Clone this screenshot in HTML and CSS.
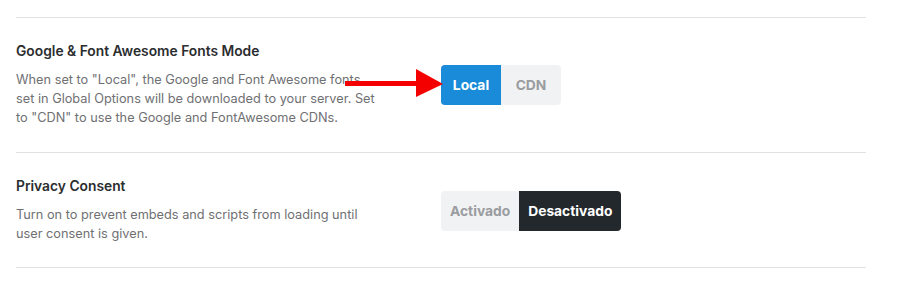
FILE: index.html
```html
<!DOCTYPE html>
<html lang="es">
  <head>
    <meta charset="utf-8">
    <title>Settings</title>
    <link rel="stylesheet" href="styles.css">
  </head>
  <body>
    <div class="settings">
      <div class="row">
        <div class="info">
          <div class="title">Google &amp; Font Awesome Fonts Mode</div>
          <div class="desc">When set to "Local", the Google and Font Awesome fonts set in Global Options will be downloaded to your server. Set to "CDN" to use the Google and FontAwesome CDNs.</div>
        </div>
        <div class="control">
          <div class="toggle">
            <span class="opt opt-blue">Local</span>
            <span class="opt">CDN</span>
          </div>
        </div>
        <svg class="arrow" width="100" height="30" viewBox="0 0 100 30">
          <rect x="0" y="12" width="74" height="5" fill="#f40000"/>
          <polygon points="71,0 71,28 98,15" fill="#f40000"/>
        </svg>
      </div>
      <div class="row">
        <div class="info">
          <div class="title">Privacy Consent</div>
          <div class="desc">Turn on to prevent embeds and scripts from loading until user consent is given.</div>
        </div>
        <div class="control">
          <div class="toggle">
            <span class="opt">Activado</span>
            <span class="opt opt-dark">Desactivado</span>
          </div>
        </div>
      </div>
    </div>
  </body>
</html>
```
FILE: styles.css
```css
body{
  margin:0;
  background:#fff;
  font-family: Inter, "Liberation Sans", sans-serif;
}
.settings{
  width:850px;
  margin:17px 0 0 16px;
  border-top:1px solid #e2e2e2;
}
.row{
  position:relative;
  display:flex;
  align-items:center;
  padding:25px 0 25px;
  border-bottom:1px solid #e2e2e2;
}
.row + .row{
  padding-bottom:24px;
}
.info{
  width:362px;
  margin-right:63px;
}
.title{
  font-size:13.8px;
  font-weight:600;
  line-height:17px;
  color:#2b2d2f;
}
.desc{
  margin-top:10px;
  font-size:12.75px;
  line-height:19px;
  color:#6f7073;
}
.toggle{
  display:flex;
  height:40px;
  border-radius:4px;
  overflow:hidden;
  background:#f1f2f3;
}
.opt{
  display:flex;
  align-items:center;
  justify-content:center;
  min-width:60px;
  box-sizing:border-box;
  padding:0 9px;
  font-size:13.8px;
  font-weight:700;
  color:#9a9ca0;
}
.opt-blue{
  background:#1a8bd9;
  color:#fff;
}
.opt-dark{
  background:#23282c;
  color:#fff;
}
/*red pointer over the first toggle*/
.arrow{
  position:absolute;
  left:329px;
  top:51px;
}
```
